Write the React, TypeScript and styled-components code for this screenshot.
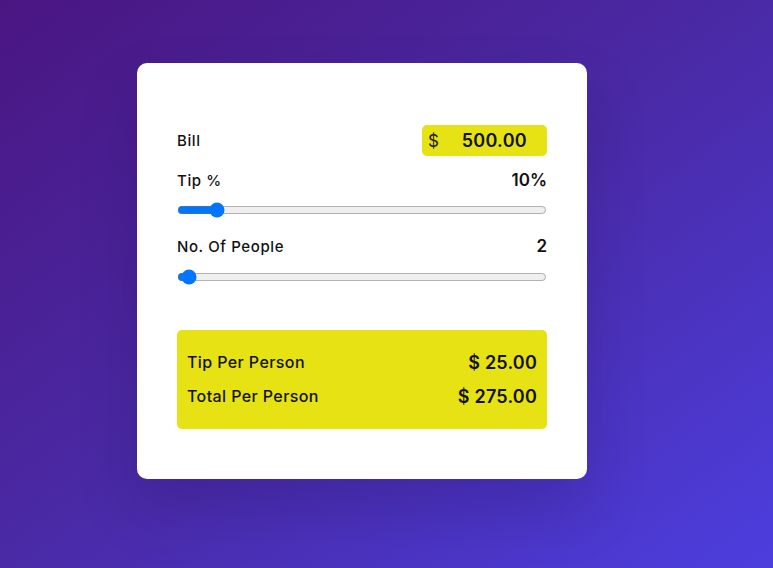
import React, { useState } from "react";
import styled, { createGlobalStyle } from "styled-components";

const Global = createGlobalStyle`
  html, body { margin: 0; padding: 0; }
  body {
    min-height: 100vh;
    background: linear-gradient(to bottom right, #4a1682 0%, #4a2aa6 50%, #4c3ede 100%);
    font-family: Inter, "Noto Sans", Arial, sans-serif;
    color: #111;
  }
`;

const Page = styled.div`
  padding: 63px 0 0 137px;
  height: 568px;
  box-sizing: border-box;
`;

const Card = styled.div`
  width: 450px;
  height: 416px;
  box-sizing: border-box;
  background: #fff;
  border-radius: 10px;
  padding: 62px 40px 50px;
  box-shadow: 0 30px 60px rgba(20, 0, 60, 0.18);
  display: flex;
  flex-direction: column;
`;

const Row = styled.div<{ $mt?: number; $h?: number }>`
  display: flex;
  align-items: center;
  justify-content: space-between;
  margin-top: ${(p) => p.$mt ?? 0}px;
  height: ${(p) => p.$h ?? 20}px;
`;

const Label = styled.span`
  font-size: 15px;
  font-weight: 500;
  color: #111;
  letter-spacing: 0.6px;
`;

const Value = styled.span`
  font-size: 17px;
  font-weight: 600;
  color: #111;
`;

const BillBox = styled.label`
  width: 125px;
  height: 31px;
  box-sizing: border-box;
  background: #e6e214;
  border-radius: 5px;
  display: flex;
  align-items: center;
  padding: 0 20px 0 6px;
`;

const Dollar = styled.span`
  font-size: 17px;
  font-weight: 400;
  color: #222;
`;

const BillInput = styled.input`
  flex: 1;
  min-width: 0;
  border: none;
  outline: none;
  background: transparent;
  text-align: right;
  font-family: inherit;
  font-size: 18px;
  font-weight: 600;
  letter-spacing: 0.3px;
  color: #111;
  padding: 0;
`;

const Slider = styled.input<{ $mt: number }>`
  width: 100%;
  margin: ${(p) => p.$mt}px 0 0;
  height: 16px;
  accent-color: #0075ff;
`;

const Result = styled.div`
  margin-top: 45px;
  height: 99px;
  box-sizing: border-box;
  background: #e6e214;
  border-radius: 5px;
  padding: 21px 10px 22px;
  display: flex;
  flex-direction: column;
  gap: 12px;
`;

const ResultRow = styled.div`
  display: flex;
  align-items: center;
  justify-content: space-between;
  height: 22px;
`;

const ResultLabel = styled.span`
  font-size: 16px;
  font-weight: 500;
  letter-spacing: 0.4px;
  color: #111;
`;

const ResultValue = styled.span`
  font-size: 18px;
  font-weight: 600;
  letter-spacing: 0.2px;
  color: #111;
`;

export default function App() {
  const [bill, setBill] = useState("500.00");
  const [tip, setTip] = useState(10);
  const [people, setPeople] = useState(2);
  const b = parseFloat(bill) || 0;
  const tipPer = (b * tip) / 100 / people;
  const totalPer = (b + (b * tip) / 100) / people;

  return (
    <>
      <Global />
      <Page>
        <Card>
          <Row $h={31}>
            <Label>Bill</Label>
            <BillBox>
              <Dollar>$</Dollar>
              <BillInput value={bill} onChange={(e) => setBill(e.target.value)} />
            </BillBox>
          </Row>
          <Row $mt={14}>
            <Label>Tip %</Label>
            <Value>{tip}%</Value>
          </Row>
          <Slider
            $mt={12}
            type="range"
            min={0}
            max={110}
            value={tip}
            onChange={(e) => setTip(Number(e.target.value))}
          />
          <Row $mt={18}>
            <Label>No. Of People</Label>
            <Value>{people}</Value>
          </Row>
          <Slider
            $mt={13}
            type="range"
            min={1}
            max={100}
            value={people}
            onChange={(e) => setPeople(Number(e.target.value))}
          />
          <Result>
            <ResultRow>
              <ResultLabel>Tip Per Person</ResultLabel>
              <ResultValue>$ {tipPer.toFixed(2)}</ResultValue>
            </ResultRow>
            <ResultRow>
              <ResultLabel>Total Per Person</ResultLabel>
              <ResultValue>$ {totalPer.toFixed(2)}</ResultValue>
            </ResultRow>
          </Result>
        </Card>
      </Page>
    </>
  );
}
